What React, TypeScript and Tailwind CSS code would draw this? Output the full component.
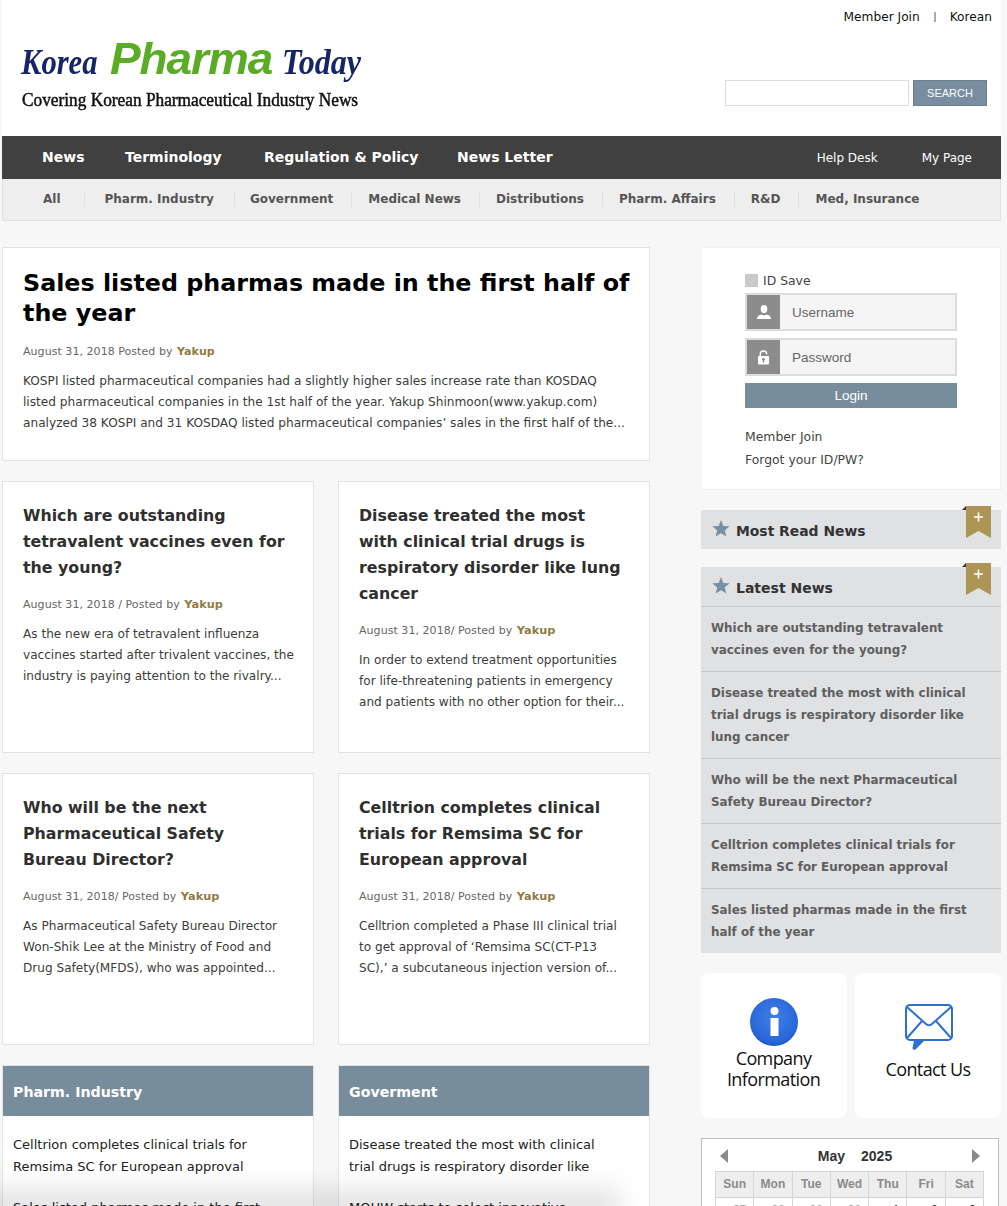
const mainNav = [
  { label: "News", width: "w-[83px]" },
  { label: "Terminology", width: "w-[139px]" },
  { label: "Regulation & Policy", width: "w-[193px]" },
  { label: "News Letter", width: "" },
];
const subNav = ["All", "Pharm. Industry", "Government", "Medical News", "Distributions", "Pharm. Affairs", "R&D", "Med, Insurance"];

const cards = [
  {
    title: ["Which are outstanding", "tetravalent vaccines even for", "the young?"],
    meta: "August 31, 2018 / Posted by",
    body: ["As the new era of tetravalent influenza", "vaccines started after trivalent vaccines, the", "industry is paying attention to the rivalry..."],
  },
  {
    title: ["Disease treated the most", "with clinical trial drugs is", "respiratory disorder like lung", "cancer"],
    meta: "August 31, 2018/ Posted by",
    body: ["In order to extend treatment opportunities", "for life-threatening patients in emergency", "and patients with no other option for their..."],
  },
  {
    title: ["Who will be the next", "Pharmaceutical Safety", "Bureau Director?"],
    meta: "August 31, 2018/ Posted by",
    body: ["As Pharmaceutical Safety Bureau Director", "Won-Shik Lee at the Ministry of Food and", "Drug Safety(MFDS), who was appointed..."],
  },
  {
    title: ["Celltrion completes clinical", "trials for Remsima SC for", "European approval"],
    meta: "August 31, 2018/ Posted by",
    body: ["Celltrion completed a Phase III clinical trial", "to get approval of ‘Remsima SC(CT-P13", "SC),’ a subcutaneous injection version of..."],
  },
];

const latest = [
  ["Which are outstanding tetravalent", "vaccines even for the young?"],
  ["Disease treated the most with clinical", "trial drugs is respiratory disorder like", "lung cancer"],
  ["Who will be the next Pharmaceutical", "Safety Bureau Director?"],
  ["Celltrion completes clinical trials for", "Remsima SC for European approval"],
  ["Sales listed pharmas made in the first", "half of the year"],
];

const weekDays = ["Sun", "Mon", "Tue", "Wed", "Thu", "Fri", "Sat"];
const firstWeek = ["27", "28", "29", "30", "1", "2", "3"];

function Star() {
  return (
    <svg viewBox="0 0 20 19" className="w-[18px] h-[17px] shrink-0 mb-[3px]">
      <path d="M10 0l2.600 6.600 7.100.5-5.500 4.500 1.800 6.900L10 14.700l-6 3.800 1.800-6.900L.3 7.100l7.100-.5z" fill="#7a90a0" />
    </svg>
  );
}

function Ribbon() {
  return (
    <div className="absolute right-[10px] top-[-4px]">
      <svg viewBox="0 0 29 32" className="w-[29px] h-[32px] block">
        <path d="M0 4l4-4v4z" fill="#333" />
        <path d="M4 0h25v32l-12.500-7L4 32z" fill="#ad9556" />
        <path d="M16.500 6.500v9M12 11h9" stroke="#fff" strokeWidth="1.600" />
      </svg>
    </div>
  );
}

function ArticleCard({ title, meta, body }: { title: string[]; meta: string; body: string[] }) {
  return (
    <div className="h-[272px] border border-[#e3e3e3] bg-white px-5 pt-[21px]">
      <h3 className="whitespace-nowrap text-[15.8px] leading-[26px] font-bold text-[#2f2f2f]">
        {title.map((t) => (
          <div key={t}>{t}</div>
        ))}
      </h3>
      <p className="mt-[14px] text-[11px] leading-[20px] tracking-[0.05px] text-[#666]">
        {meta} <b className="ml-[1px] text-[11.3px] text-[#8f7b45]">Yakup</b>
      </p>
      <div className="mt-[9px] whitespace-nowrap text-[12.1px] leading-[21px] text-[#3c3c3c]">
        {body.map((t) => (
          <div key={t}>{t}</div>
        ))}
      </div>
    </div>
  );
}

function SectionCard({ name, lines, cut }: { name: string; lines: string[]; cut: string }) {
  return (
    <div className="h-[300px] border border-[#e3e3e3] bg-white">
      <div className="h-[50px] bg-[#788d9c] px-[10px] text-[14.2px] leading-[52px] font-bold text-white">{name}</div>
      <div className="px-[10px] pt-[18px] text-[13px] leading-[22px] text-[#222]">
        {lines.map((t) => (
          <div key={t}>{t}</div>
        ))}
        <div className="mt-[19px]">{cut}</div>
      </div>
    </div>
  );
}

function LoginField({ label, kind }: { label: string; kind: "user" | "lock" }) {
  return (
    <div className="mt-[7px] flex h-[38px] w-[212px] border-2 border-[#dcdcdc] bg-[#f5f5f5]">
      <div className="flex w-[33px] items-center justify-center bg-[#8c8c8c]">
        {kind === "user" ? (
          <svg viewBox="0 0 14 14" className="size-[14px]" fill="#fff">
            <ellipse cx="7" cy="4" rx="3.300" ry="4" />
            <path d="M0 14c0-3 2.500-4 4.500-4.500L7 10.500l2.500-1C11.500 10 14 11 14 14z" />
          </svg>
        ) : (
          <svg viewBox="0 0 14 16" className="h-[15px] w-[13px]">
            <path d="M3.500 7V4.500a3.500 3.500 0 0 1 7 0" fill="none" stroke="#fff" strokeWidth="1.500" />
            <rect x="1" y="6.500" width="12" height="9" rx="1" fill="#fff" />
            <circle cx="7" cy="10" r="1.500" fill="#8c8c8c" />
            <rect x="6.300" y="10" width="1.400" height="3.500" fill="#8c8c8c" />
          </svg>
        )}
      </div>
      <div className="ml-[1px] pl-[11px] font-['Liberation_Sans',sans-serif] text-[13.5px] leading-[36px] text-[#666]">{label}</div>
    </div>
  );
}

export default function App() {
  return (
    <div className="relative h-[1206px] w-[1007px] overflow-hidden bg-[#f7f7f7] pl-[2px] pr-[6px] font-['DejaVu_Sans',sans-serif]">
      {/* Header */}
      <header className="relative h-[136px] bg-white">
        <div className="flex items-center justify-end pt-[9px] pr-[9px] text-[12.2px] leading-[16px] text-[#111]">
          <span>Member Join</span>
          <span className="mx-[14px] h-[10px] w-[2px] bg-[#aaa]" />
          <span>Korean</span>
        </div>
        <div className="absolute left-[19px] top-[25px] w-[350px] font-['Liberation_Serif',serif]">
          <div className="flex h-[47px] items-baseline whitespace-nowrap">
            <span className="inline-block w-[89px] origin-left scale-x-[0.85] text-[36px] font-bold italic text-[#16246a]">Korea</span>
            <span className="inline-block w-[173px] origin-left scale-x-[1.02] font-['Liberation_Sans',sans-serif] text-[45px] font-bold italic tracking-[-1px] text-[#5aab25]">Pharma</span>
            <span className="inline-block origin-left scale-x-[0.89] text-[36px] font-bold italic text-[#16246a]">Today</span>
          </div>
          <div className="mt-[16px] ml-[1px] origin-left scale-x-[0.91] whitespace-nowrap text-[19px] leading-[24px] text-[#111] [-webkit-text-stroke:0.5px_#111]">
            Covering Korean Pharmaceutical Industry News
          </div>
        </div>
        <div className="absolute left-[723px] top-[80px] flex gap-[4px]">
          <div className="h-[26px] w-[184px] border border-[#ddd] bg-white" />
          <div className="h-[26px] w-[74px] border border-[#6d7f8c] bg-[#788d9f] text-center font-['Liberation_Sans',sans-serif] text-[11px] leading-[24px] text-white">
            SEARCH
          </div>
        </div>
      </header>

      {/* Main nav */}
      <nav className="flex h-[43px] items-center justify-between bg-[#404040] pl-[40px] pr-[29px] text-white">
        <div className="flex text-[14px] font-bold">
          {mainNav.map((n) => (
            <span key={n.label} className={n.width}>
              {n.label}
            </span>
          ))}
        </div>
        <div className="flex gap-[44px] text-[12px]">
          <span>Help Desk</span>
          <span>My Page</span>
        </div>
      </nav>

      {/* Sub nav */}
      <div className="flex h-[42px] items-center border border-t-0 border-[#e0e0e0] bg-[#eeeeee] pb-[1px] pl-[40px] text-[12px] font-bold text-[#555]">
        {subNav.map((n, i) => (
          <div key={n} className="flex items-center">
            {i === 1 && <span className="ml-[23px] mr-[20px] h-[15px] w-px bg-[#e0e0e0]" />}
            {i === 2 && <span className="ml-[20px] mr-[15px] h-[15px] w-px bg-[#e0e0e0]" />}
            {i > 2 && <span className="ml-[18px] mr-[16px] h-[15px] w-px bg-[#e0e0e0]" />}
            <span>{n}</span>
          </div>
        ))}
      </div>

      <div className="mt-[26px] flex items-start">
        {/* Left column */}
        <main className="w-[648px] shrink-0">
          <article className="h-[214px] border border-[#e3e3e3] bg-white px-5 pt-[20px]">
            <h1 className="whitespace-nowrap text-[23.8px] leading-[30px] font-bold text-black">
              Sales listed pharmas made in the first half of
              <br />
              the year
            </h1>
            <p className="mt-[14px] text-[11px] leading-[20px] tracking-[0.05px] text-[#666]">
              August 31, 2018 Posted by <b className="ml-[1px] text-[#8f7b45]">Yakup</b>
            </p>
            <div className="mt-[9px] text-[12.15px] leading-[21px] whitespace-nowrap text-[#3c3c3c]">
              <div>KOSPI listed pharmaceutical companies had a slightly higher sales increase rate than KOSDAQ</div>
              <div>listed pharmaceutical companies in the 1st half of the year. Yakup Shinmoon(www.yakup.com)</div>
              <div>analyzed 38 KOSPI and 31 KOSDAQ listed pharmaceutical companies’ sales in the first half of the...</div>
            </div>
          </article>

          <div className="mt-[20px] grid grid-cols-[312px_312px] gap-x-[24px] gap-y-[20px]">
            {cards.map((c) => (
              <ArticleCard key={c.title[0]} {...c} />
            ))}
            <SectionCard
              name="Pharm. Industry"
              lines={["Celltrion completes clinical trials for", "Remsima SC for European approval"]}
              cut="Sales listed pharmas made in the first"
            />
            <SectionCard
              name="Goverment"
              lines={["Disease treated the most with clinical", "trial drugs is respiratory disorder like"]}
              cut="MOHW starts to select innovative"
            />
          </div>
        </main>

        {/* Right column */}
        <aside className="ml-[51px] w-[300px] shrink-0">
          <div className="h-[243px] border border-[#f0f0f0] bg-white pl-[43px] pt-[25px]">
            <div className="-mb-px flex h-[14px] items-center gap-[5px] text-[12.4px] text-[#444]">
              <span className="size-[13px] bg-[#c9c9c9]" />
              <span className="mt-[2px]">ID Save</span>
            </div>
            <LoginField label="Username" kind="user" />
            <LoginField label="Password" kind="lock" />
            <div className="mt-[7px] h-[25px] w-[212px] bg-[#788d9c] text-center font-['Liberation_Sans',sans-serif] text-[13.5px] leading-[25px] text-white">
              Login
            </div>
            <div className="mt-[17px] text-[12.4px] leading-[23px] text-[#444]">
              <div>Member Join</div>
              <div>Forgot your ID/PW?</div>
            </div>
          </div>

          <div className="relative mt-[20px] flex h-[39px] items-center gap-[6px] bg-[#dfe1e3] pl-[11px] text-[13.9px] font-bold text-[#333]">
            <Star />
            <span className="mt-[3px]">Most Read News</span>
            <Ribbon />
          </div>

          <div className="mt-[18px] bg-[#dfe1e3]">
            <div className="relative flex h-[40px] items-center gap-[6px] border-b border-[#c4c7c9] pl-[11px] text-[14px] font-bold text-[#333]">
              <Star />
              <span className="mt-[3px]">Latest News</span>
              <Ribbon />
            </div>
            {latest.map((item, i) => (
              <div
                key={item[0]}
                className={
                  i < latest.length - 1
                    ? "border-b border-[#c4c7c9] px-[10px] py-[10px] text-[11.9px] leading-[22px] font-bold text-[#5e5e5e]"
                    : "px-[10px] py-[10px] text-[11.9px] leading-[22px] font-bold text-[#5e5e5e]"
                }
              >
                {item.map((t) => (
                  <div key={t}>{t}</div>
                ))}
              </div>
            ))}
          </div>

          <div className="mt-[20px] flex gap-[8px] font-['Open_Sans',sans-serif] text-[18px] leading-[21px] tracking-[-0.6px] text-[#111]">
            <div className="flex h-[145px] w-[146px] flex-col items-center rounded-[8px] bg-white pt-[25px] pr-[1px] text-center">
              <svg viewBox="0 0 48 48" className="ml-[1px] size-[48px]">
                <defs>
                  <radialGradient id="infoBall" cx="50%" cy="40%" r="60%">
                    <stop offset="0%" stopColor="#3f7fe8" />
                    <stop offset="85%" stopColor="#2a66d8" />
                    <stop offset="100%" stopColor="#1f55c4" />
                  </radialGradient>
                </defs>
                <circle cx="24" cy="24" r="24" fill="url(#infoBall)" />
                <circle cx="24.500" cy="13" r="4" fill="#fff" />
                <rect x="20.500" y="20" width="8" height="18" fill="#fff" />
              </svg>
              <div className="mt-[2px]">
                Company
                <br />
                Information
              </div>
            </div>
            <div className="flex h-[145px] w-[146px] flex-col items-center rounded-[8px] bg-white pt-[31px] text-center">
              <svg viewBox="0 0 48 48" className="ml-[2px] size-[48px]" fill="none" stroke="#2f6fd4" strokeWidth="2">
                <rect x="1" y="1" width="46" height="35" rx="4" />
                <path d="M2 3l19 17q3 2.500 6 0L46 3M2 34l15-17M46 34L31 17" />
                <path d="M9 36l-1.500 8q0 2.500 3 1.500L20 36z" fill="#2f6fd4" stroke="none" />
              </svg>
              <div className="mt-[7px]">Contact Us</div>
            </div>
          </div>

          {/* Calendar */}
          <div className="mt-[20px] h-[120px] w-[298px] border border-[#bdbdbd] bg-white px-[13px] font-['Liberation_Sans',sans-serif]">
            <div className="flex h-[32px] items-center justify-between px-[5px] pt-[2px]">
              <span className="h-0 w-0 border-y-[7px] border-r-[8px] border-y-transparent border-r-[#8a8a8a]" />
              <span className="ml-[10px] text-[14px] font-bold text-[#333]">
                May<span className="ml-[16px]">2025</span>
              </span>
              <span className="h-0 w-0 border-y-[7px] border-l-[8px] border-y-transparent border-l-[#8a8a8a]" />
            </div>
            <div className="grid w-[269px] grid-cols-7 border-t border-l border-[#d5d5d5] text-center text-[12px]">
              {weekDays.map((d) => (
                <div key={d} className="h-[26px] border-r border-b border-[#d5d5d5] bg-[#eeeeee] font-bold leading-[24px] text-[#8a8a8a]">
                  {d}
                </div>
              ))}
              {firstWeek.map((d, i) => (
                <div key={d} className={i < 4 ? "h-[25px] border-r border-[#d5d5d5] pr-[7px] text-right leading-[24px] text-[#aaa]" : "h-[25px] border-r border-[#d5d5d5] pr-[7px] text-right leading-[24px] text-[#333]"}>
                  {d}
                </div>
              ))}
            </div>
          </div>
        </aside>
      </div>

      {/* Soft shadow along the bottom edge of the capture */}
      <div className="pointer-events-none absolute bottom-[-18px] left-[-20px] h-[36px] w-[640px] bg-black/10 blur-[12px]" />
    </div>
  );
}
